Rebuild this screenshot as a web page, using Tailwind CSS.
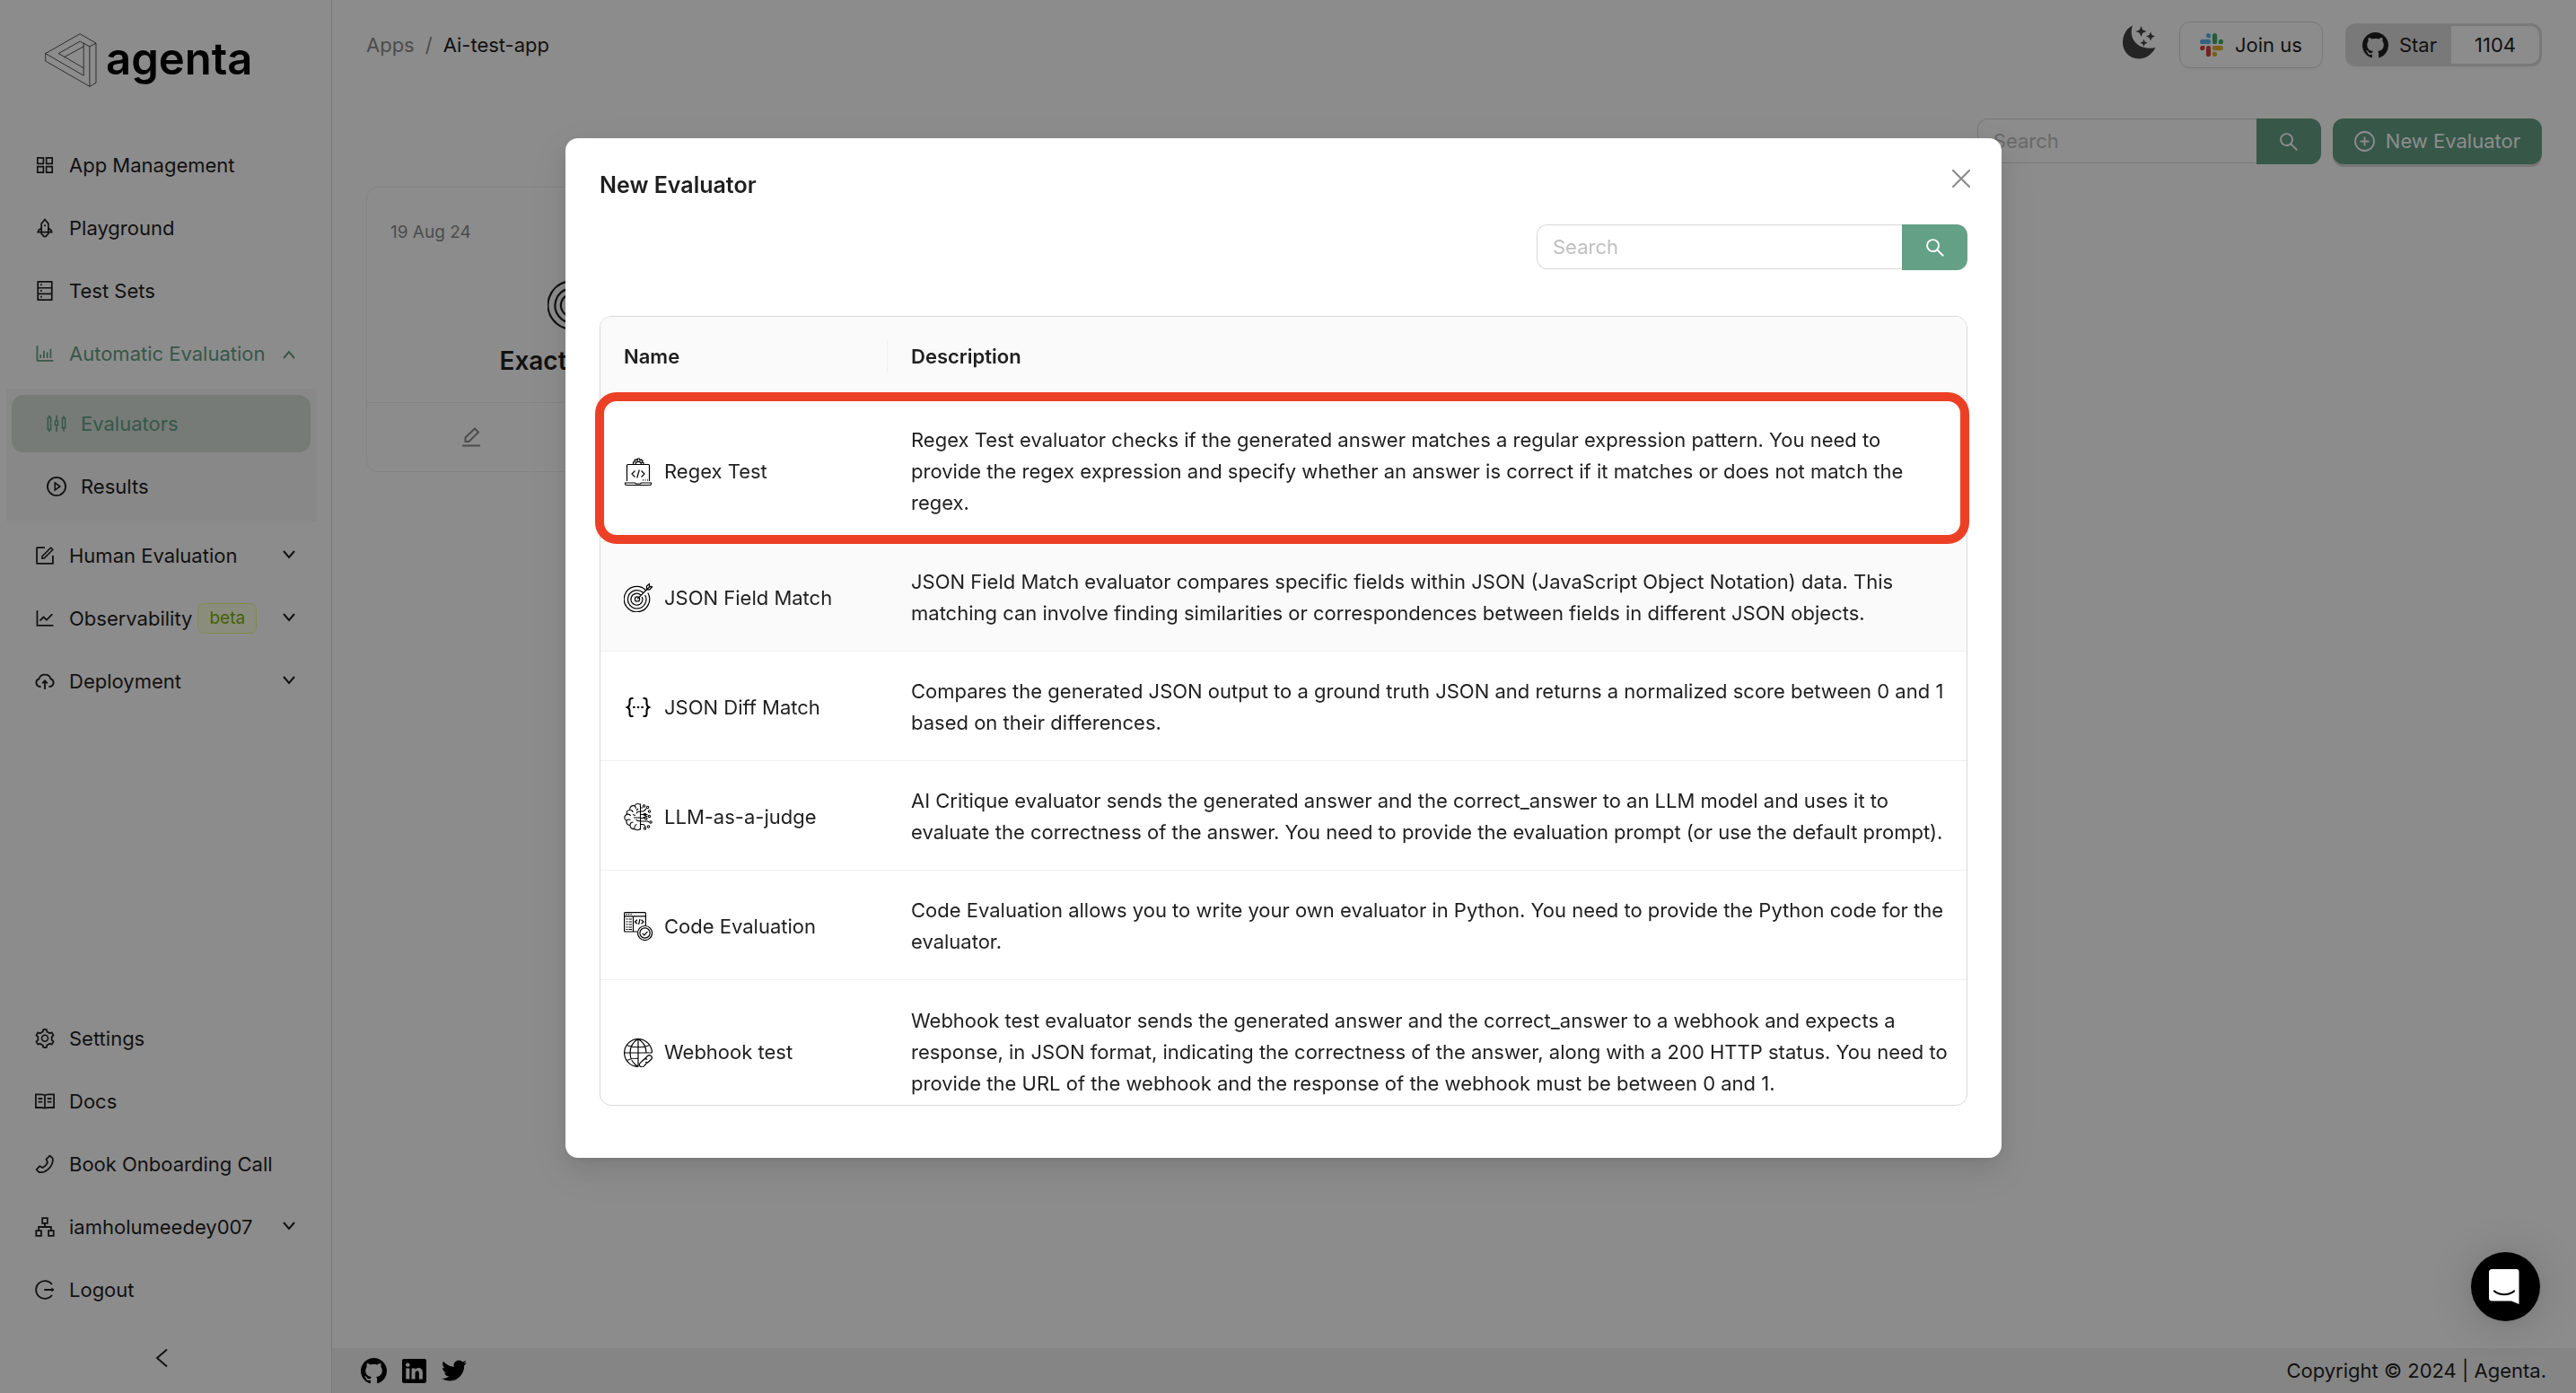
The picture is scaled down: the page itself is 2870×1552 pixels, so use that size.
<!DOCTYPE html>
<html lang="en">
<head>
<meta charset="utf-8">
<title>Agenta - Evaluators</title>
<meta name="viewport" content="width=device-width, initial-scale=1">
<script src="https://cdn.jsdelivr.net/npm/@tailwindcss/browser@4"></script>
</head>
<body class="bg-white font-['Inter',sans-serif] text-[22px] leading-[35px] text-[#1f1f1f]">

<!-- Shared icons -->
<svg class="hidden" aria-hidden="true">
  <symbol id="i-down" viewBox="0 0 16 16"><path d="M2 3l6 7 6-7" fill="none" stroke="currentColor" stroke-width="2"/></symbol>
  <symbol id="i-search" viewBox="64 64 896 896"><path fill="currentColor" d="M909.600 854.500L649.900 594.800C690.200 542.700 712 479 712 412c0-80.200-31.300-155.400-87.900-212.100-56.600-56.700-132-87.900-212.100-87.900s-155.500 31.300-212.100 87.900C143.200 256.500 112 331.800 112 412c0 80.100 31.300 155.500 87.900 212.100C256.500 680.800 331.800 712 412 712c67 0 130.600-21.800 182.700-62l259.700 259.600a8.200 8.200 0 0011.600 0l43.600-43.500a8.200 8.200 0 000-11.600zM570.400 570.400C528 612.700 471.800 636 412 636s-116-23.300-158.400-65.600C211.300 528 188 471.800 188 412s23.300-116.100 65.600-158.400C296 211.300 352.200 188 412 188s116.100 23.200 158.400 65.600S636 352.200 636 412s-23.300 116.100-65.600 158.400z"/></symbol>
  <symbol id="i-github" viewBox="0 0 16 16"><path fill="currentColor" d="M8 0C3.58 0 0 3.58 0 8c0 3.54 2.29 6.53 5.47 7.59.4.07.55-.17.55-.38 0-.19-.01-.82-.01-1.49-2.01.37-2.53-.49-2.69-.94-.09-.23-.48-.94-.82-1.13-.28-.15-.68-.52-.01-.53.63-.01 1.08.58 1.23.82.72 1.21 1.87.87 2.33.66.07-.52.28-.87.51-1.07-1.78-.2-3.64-.89-3.64-3.95 0-.87.31-1.59.82-2.15-.08-.2-.36-1.02.08-2.12 0 0 .67-.21 2.2.82.64-.18 1.32-.27 2-.27.68 0 1.36.09 2 .27 1.53-1.04 2.2-.82 2.2-.82.44 1.1.16 1.92.08 2.12.51.56.82 1.27.82 2.15 0 3.07-1.87 3.75-3.65 3.95.29.25.54.73.54 1.48 0 1.07-.01 1.93-.01 2.2 0 .21.15.46.55.38A8.01 8.01 0 0 0 16 8c0-4.42-3.58-8-8-8z"/></symbol>
  <symbol id="i-target" viewBox="0 0 32 32">
    <g fill="none" stroke="currentColor" stroke-width="1.200">
      <path d="M24.500 7.500a14.200 14.200 0 1 0 2.300 3"/><path d="M21.500 10.200a10.200 10.200 0 1 0 2.200 2.800"/><path d="M18.800 12.900a6.500 6.500 0 1 0 1.500 2"/>
      <circle cx="15" cy="17.400" r="2.600"/><path d="M15 17.400L29 3.500M25.500 6.800V3l3-2.600v3.200h3.200L29 6.800z"/>
    </g>
  </symbol>
</svg>

<div class="flex min-h-screen">
  <!-- Sidebar -->
  <aside class="flex w-[370px] shrink-0 flex-col border-r border-[#dcdcdc] px-[7px]">
    <a href="#" class="mt-[37px] mb-[55px] ml-[43px] flex h-[60px] items-center gap-[10px]">
      <svg class="h-[60px] w-[58px]" viewBox="42 40 172 178" fill="none" stroke="#000" stroke-width="2"><path d="M44 107L158 42l53 31v131l-21 12L44 132zM190 216V84l21-11M190 84l-32-17-71 40 83 48M44 107l126 73V72M170 84l-64 35"/></svg>
      <span class="pb-1 text-[49px] font-semibold text-black">agenta</span>
    </a>
    <nav class="flex flex-1 flex-col">
      <ul class="flex flex-col gap-[6px]">
        <li><a href="#" class="flex h-16 items-center pl-8"><svg class="mr-4 size-[22px]" viewBox="64 64 896 896" fill="currentColor"><path d="M464 144H160c-8.800 0-16 7.200-16 16v304c0 8.800 7.200 16 16 16h304c8.800 0 16-7.200 16-16V160c0-8.800-7.200-16-16-16zm-52 268H212V212h200v200zm452-268H560c-8.800 0-16 7.200-16 16v304c0 8.800 7.200 16 16 16h304c8.800 0 16-7.200 16-16V160c0-8.800-7.200-16-16-16zm-52 268H612V212h200v200zM464 544H160c-8.800 0-16 7.200-16 16v304c0 8.800 7.200 16 16 16h304c8.800 0 16-7.200 16-16V560c0-8.800-7.200-16-16-16zm-52 268H212V612h200v200zm452-268H560c-8.800 0-16 7.200-16 16v304c0 8.800 7.200 16 16 16h304c8.800 0 16-7.200 16-16V560c0-8.800-7.200-16-16-16zm-52 268H612V612h200v200z"/></svg>App Management</a></li>
        <li><a href="#" class="flex h-16 items-center pl-8"><svg class="mr-4 size-[22px]" viewBox="64 64 896 896" fill="none" stroke="currentColor" stroke-width="70"><path d="M355 700V315L512 125l157 190v385M355 520c-95 45-155 115-160 180h634c-5-65-65-135-160-180M355 700v60c0 45 50 60 65 70 20 50 50 75 92 75s72-25 92-75c15-10 65-25 65-70v-60"/><circle cx="512" cy="400" r="45" fill="currentColor" stroke="none"/></svg>Playground</a></li>
        <li><a href="#" class="flex h-16 items-center pl-8"><svg class="mr-4 size-[22px]" viewBox="64 64 896 896" fill="currentColor"><path d="M832 64H192c-17.700 0-32 14.300-32 32v832c0 17.700 14.300 32 32 32h640c17.700 0 32-14.300 32-32V96c0-17.700-14.300-32-32-32zm-600 72h560v208H232V136zm560 480H232V408h560v208zm0 272H232V680h560v208zM304 240a40 40 0 1080 0 40 40 0 10-80 0zm0 272a40 40 0 1080 0 40 40 0 10-80 0zm0 272a40 40 0 1080 0 40 40 0 10-80 0z"/></svg>Test Sets</a></li>
        <li>
          <button type="button" aria-expanded="true" class="flex h-16 w-full items-center pr-8 pl-8 text-[#64a085]"><svg class="mr-4 size-[22px]" viewBox="64 64 896 896" fill="currentColor"><path d="M888 792H200V168c0-4.400-3.600-8-8-8h-56c-4.400 0-8 3.600-8 8v688c0 4.400 3.600 8 8 8h752c4.400 0 8-3.600 8-8v-56c0-4.400-3.600-8-8-8zm-600-80h56c4.400 0 8-3.600 8-8V560c0-4.400-3.600-8-8-8h-56c-4.400 0-8 3.600-8 8v144c0 4.400 3.600 8 8 8zm152 0h56c4.400 0 8-3.600 8-8V384c0-4.400-3.600-8-8-8h-56c-4.400 0-8 3.600-8 8v320c0 4.400 3.600 8 8 8zm152 0h56c4.400 0 8-3.600 8-8V462c0-4.400-3.600-8-8-8h-56c-4.400 0-8 3.600-8 8v242c0 4.400 3.600 8 8 8zm152 0h56c4.400 0 8-3.600 8-8V304c0-4.400-3.600-8-8-8h-56c-4.400 0-8 3.600-8 8v400c0 4.400 3.600 8 8 8z"/></svg>Automatic Evaluation<svg class="ml-auto size-4 rotate-180"><use href="#i-down"/></svg></button>
          <ul class="mt-[7px] mr-[9px] flex flex-col gap-[6px] bg-[#f8f8f8] py-[7px] pr-[7px] pl-[6px]">
            <li><a href="#" aria-current="page" class="flex h-16 items-center rounded-[13px] bg-[#d7e1da] pl-[39px] text-[#64a085]"><svg class="mr-4 size-[22px]" viewBox="64 64 896 896" fill="none" stroke="currentColor" stroke-width="64"><path d="M120 240h130v540H120zM185 140v100M185 780v100M447 400h130v170H447zM512 140v260M512 570v310M775 260h130v440H775zM840 160v100M840 700v160"/></svg>Evaluators</a></li>
            <li><a href="#" class="flex h-16 items-center pl-[39px]"><svg class="mr-4 size-[22px]" viewBox="64 64 896 896" fill="none" stroke="currentColor" stroke-width="76"><circle cx="512" cy="512" r="410"/><path d="M440 350l225 162-225 162z" stroke-width="66"/></svg>Results</a></li>
          </ul>
        </li>
        <li><button type="button" aria-expanded="false" class="flex h-16 w-full items-center pr-8 pl-8"><svg class="mr-4 size-[22px]" viewBox="64 64 896 896" fill="currentColor"><path d="M904 512h-56c-4.400 0-8 3.600-8 8v320H184V184h320c4.400 0 8-3.600 8-8v-56c0-4.400-3.600-8-8-8H144c-17.700 0-32 14.300-32 32v736c0 17.700 14.300 32 32 32h736c17.700 0 32-14.300 32-32V520c0-4.400-3.600-8-8-8z"/><path d="M355.900 534.900L354 653.800c-.1 8.900 7.100 16.200 16 16.200h.4l118-2.900c2-.1 4-.9 5.400-2.300l415.900-415c3.100-3.100 3.100-8.200 0-11.300L785.400 114.300c-1.600-1.600-3.600-2.300-5.700-2.300s-4.100.8-5.700 2.300l-415.800 415a8.300 8.300 0 00-2.300 5.600zm63.500 23.600L779.700 199l45.200 45.100-360.500 359.700-45.700 1.100.7-46.400z"/></svg>Human Evaluation<svg class="ml-auto size-4"><use href="#i-down"/></svg></button></li>
        <li><button type="button" aria-expanded="false" class="flex h-16 w-full items-center pr-8 pl-8"><svg class="mr-4 size-[22px]" viewBox="64 64 896 896" fill="currentColor"><path d="M888 792H200V168c0-4.400-3.600-8-8-8h-56c-4.400 0-8 3.600-8 8v688c0 4.400 3.600 8 8 8h752c4.400 0 8-3.600 8-8v-56c0-4.400-3.600-8-8-8zM305.800 637.700c3.100 3.100 8.100 3.100 11.300 0l138.300-137.600L583 628.500c3.100 3.100 8.200 3.100 11.300 0l275.400-275.300c3.100-3.100 3.100-8.200 0-11.300l-39.600-39.600a8.030 8.030 0 00-11.300 0l-230 229.900L461.400 404a8.030 8.030 0 00-11.300 0L266.300 586.700a8.030 8.030 0 000 11.300l39.500 39.700z"/></svg>Observability<span class="ml-[6px] rounded-[7px] border border-[#eaff8f] bg-[#fcffe6] px-3 text-[19px] leading-[32px] text-[#7cb305]">beta</span><svg class="ml-auto size-4"><use href="#i-down"/></svg></button></li>
        <li><button type="button" aria-expanded="false" class="flex h-16 w-full items-center pr-8 pl-8"><svg class="mr-4 size-[22px]" viewBox="64 64 896 896" fill="none" stroke="currentColor" stroke-width="76"><path d="M330 755H290a180 180 0 0 1-45-350 280 280 0 0 1 534 0 180 180 0 0 1-45 350h-40M512 880V520M400 610l112-120 112 120"/></svg>Deployment<svg class="ml-auto size-4"><use href="#i-down"/></svg></button></li>
      </ul>
      <ul class="mt-auto flex flex-col gap-[6px]">
        <li><a href="#" class="flex h-16 items-center pl-8"><svg class="mr-4 size-[22px]" viewBox="64 64 896 896" fill="currentColor"><path d="M924.800 625.700l-65.500-56c3.100-19 4.700-38.400 4.700-57.800s-1.600-38.800-4.700-57.800l65.500-56a32.030 32.030 0 009.300-35.200l-.9-2.600a443.740 443.740 0 00-79.700-137.900l-1.800-2.100a32.120 32.120 0 00-35.100-9.500l-81.300 28.900c-30-24.600-63.500-44-99.700-57.600l-15.700-85a32.050 32.050 0 00-25.800-25.700l-2.700-.5c-52.100-9.400-106.900-9.400-159 0l-2.700.5a32.050 32.050 0 00-25.800 25.700l-15.800 85.400a351.860 351.860 0 00-99 57.400l-81.900-29.100a32 32 0 00-35.100 9.500l-1.800 2.100a446.020 446.020 0 00-79.700 137.900l-.9 2.600c-4.500 12.500-.8 26.500 9.300 35.200l66.300 56.600c-3.100 18.800-4.600 38-4.600 57.100 0 19.200 1.500 38.400 4.600 57.100L99 625.500a32.030 32.030 0 00-9.300 35.200l.9 2.600c18.100 50.400 44.900 96.900 79.700 137.900l1.800 2.100a32.120 32.120 0 0035.100 9.500l81.900-29.100c29.800 24.500 63.100 43.900 99 57.400l15.800 85.400a32.050 32.050 0 0025.800 25.700l2.700.5a449.400 449.400 0 00159 0l2.700-.5a32.050 32.050 0 0025.800-25.700l15.700-85a350 350 0 0099.700-57.600l81.300 28.900a32 32 0 0035.100-9.500l1.800-2.100c34.800-41.100 61.600-87.500 79.700-137.900l.9-2.600c4.500-12.300.8-26.300-9.300-35zM788.300 465.900c2.500 15.100 3.800 30.600 3.800 46.100s-1.300 31-3.800 46.100l-6.600 40.100 74.700 63.900a370.030 370.030 0 01-42.600 73.600L721 702.800l-31.400 25.800c-23.900 19.600-50.500 35-79.300 45.800l-38.100 14.300-17.900 97a377.500 377.500 0 01-85 0l-17.900-97.200-37.800-14.500c-28.500-10.800-55-26.200-78.700-45.700l-31.400-25.900-93.400 33.200c-17-22.900-31.200-47.600-42.600-73.600l75.500-64.500-6.500-40c-2.400-14.900-3.700-30.300-3.700-45.500 0-15.300 1.200-30.600 3.700-45.500l6.500-40-75.500-64.500c11.300-26.100 25.600-50.700 42.600-73.600l93.400 33.200 31.400-25.900c23.700-19.500 50.200-34.900 78.700-45.700l37.900-14.300 17.900-97.200c28.100-3.200 56.800-3.200 85 0l17.900 97 38.100 14.300c28.700 10.800 55.400 26.200 79.300 45.800l31.400 25.800 92.800-32.900c17 22.900 31.200 47.600 42.600 73.600L781.800 426l6.500 39.900zM512 326c-97.200 0-176 78.800-176 176s78.800 176 176 176 176-78.800 176-176-78.800-176-176-176zm79.200 255.200A111.600 111.600 0 01512 614c-29.900 0-58-11.700-79.200-32.800A111.600 111.600 0 01400 502c0-29.900 11.700-58 32.800-79.200C454 401.600 482.100 390 512 390c29.900 0 58 11.600 79.200 32.800A111.600 111.600 0 01624 502c0 29.900-11.700 58-32.800 79.200z"/></svg>Settings</a></li>
        <li><a href="#" class="flex h-16 items-center pl-8"><svg class="mr-4 size-[22px]" viewBox="64 64 896 896" fill="none" stroke="currentColor" stroke-width="72"><path d="M100 197h260c60 0 152 40 152 50 0-10 92-50 152-50h260v600H664c-60 0-152 40-152 50 0-10-92-50-152-50H100zM512 240v600M210 390h190M210 535h190M624 390h190M624 535h190"/></svg>Docs</a></li>
        <li><a href="#" class="flex h-16 items-center pl-8"><svg class="mr-4 size-[22px]" viewBox="64 64 896 896" fill="none" stroke="currentColor" stroke-width="72" stroke-linejoin="round"><path d="M740 130l130 120c20 190-70 370-215 500-125 110-265 155-405 130L130 760l150-160 135 75c110-55 175-130 220-240l-65-140z"/></svg>Book Onboarding Call</a></li>
        <li><button type="button" aria-expanded="false" class="flex h-16 w-full items-center pr-8 pl-8"><svg class="mr-4 size-[22px]" viewBox="64 64 896 896" fill="none" stroke="currentColor" stroke-width="72"><path d="M396 108h232v232H396zM116 684h232v232H116zM676 684h232v232H676zM512 340v170M232 684V512h560v172"/></svg>iamholumeedey007<svg class="ml-auto size-4"><use href="#i-down"/></svg></button></li>
        <li><a href="#" class="flex h-16 items-center pl-8"><svg class="mr-4 size-[22px]" viewBox="64 64 896 896" fill="none" stroke="currentColor" stroke-width="72"><path d="M835 265a405 405 0 1 0 0 494M480 512h400"/><path d="M815 410l130 102-130 102z" fill="currentColor" stroke="none"/></svg>Logout</a></li>
      </ul>
    </nav>
    <button type="button" aria-label="Collapse sidebar" class="flex h-[83px] items-center justify-center pt-1 pr-2"><svg class="size-[22px]" viewBox="0 0 22 22" fill="none" stroke="currentColor" stroke-width="2"><path d="M16 1.500L5 11l11 9.500"/></svg></button>
  </aside>

  <!-- Page -->
  <div class="flex min-w-0 flex-1 flex-col">
    <header class="flex items-center justify-between px-[38px] pt-[24px]">
      <nav aria-label="Breadcrumb" class="flex gap-3"><a href="#" class="text-[#8c8c8c]">Apps</a><span class="text-[#8c8c8c]">/</span><span>Ai-test-app</span></nav>
      <div class="flex items-center">
        <button type="button" aria-label="Dark mode" class="mr-[26px] mb-[6px]"><svg class="size-[38px]" viewBox="0 0 38 38" fill="#434343"><path d="M12 0.500C7 14 17 29 37.500 25 34 32 27 37.500 19 37.500 8 37.500 1 29 1 19.500 1 10 6 3 12 .5z"/><path d="M21.500 1l1.700 4.300 4.300 1.700-4.300 1.700-1.700 4.300-1.700-4.300L15.500 7l4.300-1.700zM32 7.500l1.500 3.500 3.500 1.500-3.500 1.500-1.500 3.500-1.500-3.500L27 12.500l3.500-1.500zM24.500 15.500l1.200 3 3 1.200-3 1.200-1.200 3-1.200-3-3-1.200 3-1.200z"/></svg></button>
        <a href="#" class="mr-[25px] flex h-[52px] items-center gap-[13px] rounded-[12px] border border-[#d9d9d9] px-[22px] shadow-[0_3px_0_rgba(0,0,0,0.02)]">
          <svg class="size-[26px]" viewBox="0 0 26 26"><path d="M9.500 0a2.600 2.600 0 0 1 2.600 2.600v2.600H9.500a2.600 2.600 0 0 1 0-5.200zM2.700 6.800h6.800a2.600 2.600 0 0 1 0 5.200H2.700a2.600 2.600 0 0 1 0-5.200z" fill="#5cb8e8"/><path d="M16.500 0a2.600 2.600 0 0 1 2.600 2.600v6.800a2.600 2.600 0 0 1-5.200 0V2.600A2.600 2.600 0 0 1 16.500 0zM20.800 9.400a2.600 2.600 0 1 1 2.600 2.600h-2.600z" fill="#41ac66"/><path d="M16.500 14h6.800a2.600 2.600 0 0 1 0 5.200h-6.800a2.600 2.600 0 0 1 0-5.200zM13.900 20.800h2.600a2.600 2.600 0 1 1-2.600 2.600z" fill="#dcae30"/><path d="M9.500 14a2.600 2.600 0 0 1 2.600 2.600v6.800a2.600 2.600 0 0 1-5.200 0v-6.800A2.600 2.600 0 0 1 9.500 14zM2.700 14h2.600v2.600A2.600 2.600 0 1 1 2.700 14z" fill="#d9403c"/></svg>Join us
        </a>
        <a href="#" class="flex h-[48px] items-stretch rounded-[12px] bg-[#dcdcdc] pr-[3px] shadow-[0_3px_0_rgba(0,0,0,0.02)]">
          <span class="flex items-center gap-[12px] pr-4 pl-[19px]"><svg class="size-[29px]"><use href="#i-github"/></svg>Star</span>
          <span class="my-[3px] flex items-center rounded-r-[10px] bg-white px-[26px]">1104</span>
        </a>
      </div>
    </header>

    <main class="flex flex-1 flex-col px-[38px] pt-[56px] pb-8">
      <div class="flex items-start justify-end gap-[13px]">
        <form class="flex w-[383px]">
          <input type="search" aria-label="Search evaluators" placeholder="Search" class="h-[50px] min-w-0 flex-1 rounded-l-[12px] border border-r-0 border-[#d9d9d9] px-[17px] placeholder:text-[#bfbfbf]">
          <button type="button" aria-label="Search" class="flex h-[51px] w-[72px] items-center justify-center rounded-r-[12px] bg-[#64a085] text-white"><svg class="size-[22px]"><use href="#i-search"/></svg></button>
        </form>
        <button type="button" class="flex h-[51px] items-center gap-[12px] rounded-[12px] bg-[#64a085] px-6 text-white shadow-[0_3px_0_#d9d9d9]"><svg class="size-[23px]" viewBox="0 0 23 23" fill="none" stroke="currentColor" stroke-width="1.800"><circle cx="11.500" cy="11.500" r="10.500"/><path d="M11.500 6.500v10M6.500 11.500h10"/></svg>New Evaluator</button>
      </div>

      <article class="mt-[25px] w-[464px] rounded-[13px] border border-[#f0f0f0]">
        <div class="flex h-[239px] flex-col items-center">
          <span class="mt-[32px] self-start pl-[26px] text-[19px] text-[#8c8c8c]">19 Aug 24</span>
          <svg class="mt-[31px] size-[60px]"><use href="#i-target"/></svg>
          <h3 class="mt-[18px] text-[28px] font-semibold">Exact Match</h3>
        </div>
        <div class="grid h-[77px] grid-cols-2 place-items-center border-t border-[#f0f0f0] text-[#8c8c8c]">
          <button type="button" aria-label="Edit"><svg class="size-[22px]" viewBox="0 0 22 22" fill="none" stroke="currentColor" stroke-width="2"><path d="M1 20.500h20M4.500 16v-4.500L15 1.500l4 4L8.500 16z"/></svg></button>
          <button type="button" aria-label="Delete"><svg class="size-[22px]" viewBox="0 0 22 22" fill="none" stroke="currentColor" stroke-width="2"><path d="M1 5h20M7 5V1.500h8V5M4 5l1 15.500h12L18 5"/></svg></button>
        </div>
      </article>
    </main>

    <footer class="flex h-[50px] items-center justify-between bg-[#f3f3f3] pr-[33px] pl-8">
      <div class="flex items-center gap-[17px] text-black">
        <a href="#" aria-label="GitHub"><svg class="size-[29px]"><use href="#i-github"/></svg></a>
        <a href="#" aria-label="LinkedIn"><svg class="size-[27px]" viewBox="0 0 16 16" fill="currentColor"><path d="M0 1.146C0 .513.526 0 1.175 0h13.650C15.474 0 16 .513 16 1.146v13.708c0 .633-.526 1.146-1.175 1.146H1.175C.526 16 0 15.487 0 14.854V1.146zm4.943 12.248V6.169H2.542v7.225h2.401zm-1.200-8.212c.837 0 1.358-.554 1.358-1.248-.015-.709-.520-1.248-1.342-1.248-.822 0-1.359.540-1.359 1.248 0 .694.521 1.248 1.327 1.248h.016zm4.908 8.212V9.359c0-.216.016-.432.080-.586.173-.431.568-.878 1.232-.878.869 0 1.216.662 1.216 1.634v3.865h2.401V9.250c0-2.220-1.184-3.252-2.764-3.252-1.274 0-1.845.700-2.165 1.193v.025h-.016a5.540 5.540 0 0 1 .016-.025V6.169h-2.400c.030.678 0 7.225 0 7.225h2.400z"/></svg></a>
        <a href="#" aria-label="Twitter"><svg class="size-[28px]" viewBox="0 0 24 24" fill="currentColor"><path d="M23.953 4.570a10 10 0 01-2.825.775 4.958 4.958 0 002.163-2.723c-.951.555-2.005.959-3.127 1.184a4.920 4.920 0 00-8.384 4.482C7.690 8.095 4.067 6.130 1.640 3.162a4.822 4.822 0 00-.666 2.475c0 1.710.870 3.213 2.188 4.096a4.904 4.904 0 01-2.228-.616v.060a4.923 4.923 0 003.946 4.827 4.996 4.996 0 01-2.212.085 4.936 4.936 0 004.604 3.417 9.867 9.867 0 01-6.102 2.105c-.390 0-.779-.023-1.170-.067a13.995 13.995 0 007.557 2.209c9.053 0 13.998-7.496 13.998-13.985 0-.210 0-.420-.015-.630A9.935 9.935 0 0024 4.590z"/></svg></a>
      </div>
      <p>Copyright © 2024 | Agenta.</p>
    </footer>
  </div>
</div>

<!-- Modal -->
<div class="fixed inset-0 flex items-start justify-center bg-black/45 pt-[154px] pr-[10px]">
  <section role="dialog" aria-modal="true" aria-labelledby="modal-title" class="relative w-[1600px] rounded-[14px] bg-white px-[38px] pb-[58px] shadow-[0_10px_26px_rgba(0,0,0,0.08),0_5px_10px_-6px_rgba(0,0,0,0.12),0_14px_45px_13px_rgba(0,0,0,0.05)]">
    <div class="flex items-center justify-between pt-[32px]">
      <h2 id="modal-title" class="text-[25px] leading-[40px] font-semibold">New Evaluator</h2>
      <button type="button" aria-label="Close" class="mr-[-4px] mb-[14px] text-[#8c8c8c]"><svg class="size-[22px]" viewBox="0 0 22 22" fill="none" stroke="currentColor" stroke-width="2.200" stroke-linecap="round"><path d="M2 2l18 18M20 2L2 20"/></svg></button>
    </div>
    <form class="mt-[24px] ml-auto flex w-[480px]">
      <input type="search" aria-label="Search evaluator types" placeholder="Search" class="h-[50px] min-w-0 flex-1 rounded-l-[12px] border border-r-0 border-[#d9d9d9] px-[17px] placeholder:text-[#bfbfbf]">
      <button type="button" aria-label="Search" class="flex h-[51px] w-[73px] items-center justify-center rounded-r-[12px] bg-[#64a085] text-white"><svg class="size-[22px]"><use href="#i-search"/></svg></button>
    </form>

    <div class="relative mt-[51px]">
      <div class="h-[880px] overflow-hidden rounded-[13px] border border-[#d9d9d9]">
        <table class="w-full table-fixed border-separate border-spacing-0 text-left">
          <colgroup><col class="w-[320px]"><col></colgroup>
          <thead>
            <tr class="h-[88px] bg-[#fafafa]">
              <th scope="col" class="border-b border-[#f0f0f0] pt-[2px] pl-[26px] font-semibold"><div class="border-r border-[#f0f0f0]">Name</div></th>
              <th scope="col" class="border-b border-[#f0f0f0] px-[26px] pt-[2px] font-semibold">Description</th>
            </tr>
          </thead>
          <tbody>
            <tr>
              <td class="border-b border-[#f0f0f0] pt-[32px] pb-[25px] pl-[26px]"><div class="flex items-center gap-[13px]">
                <svg class="size-8" viewBox="0 0 32 32" fill="none" stroke="#000" stroke-width="1.200"><path d="M3.500 26V8.500a1 1 0 0 1 1-1h23a1 1 0 0 1 1 1V26M1.500 28h11l1 1h5l1-1h11v1.300c0 .7-.6 1.200-1.500 1.200H3c-.9 0-1.500-.5-1.500-1.200zM12.500 14.500L9 18l3.500 3.500M19.500 14.500L23 18l-3.500 3.500M17.300 13.500l-2.600 9"/><path d="M10.500 7.500V5l2-.5-.5-2 2-.5 1 1 .5-2h2l.5 2 1.500-1 1.500 1.500-1 1.500 2 .5v2M13 7.500a3.200 3.200 0 0 1 6.400 0"/><path d="M21 24.800h1M23.500 24.800h1M26 24.800h1"/></svg>Regex Test</div></td>
              <td class="border-b border-[#f0f0f0] pt-[32px] pr-[20px] pb-[25px] pl-[26px]">Regex Test evaluator checks if the generated answer matches a regular expression pattern. You need to provide the regex expression and specify whether an answer is correct if it matches or does not match the regex.</td>
            </tr>
            <tr class="bg-[#fafafa]">
              <td class="border-b border-[#f0f0f0] pt-[27px] pb-[24px] pl-[26px]"><div class="flex items-center gap-[13px]"><svg class="size-8 text-black"><use href="#i-target"/></svg>JSON Field Match</div></td>
              <td class="border-b border-[#f0f0f0] pt-[27px] pr-[20px] pb-[24px] pl-[26px]">JSON Field Match evaluator compares specific fields within JSON (JavaScript Object Notation) data. This matching can involve finding similarities or correspondences between fields in different JSON objects.</td>
            </tr>
            <tr>
              <td class="border-b border-[#f0f0f0] pt-[27px] pb-[24px] pl-[26px]"><div class="flex items-center gap-[13px]">
                <svg class="size-8" viewBox="0 0 32 32" fill="none" stroke="#000" stroke-width="2"><path d="M10.500 6H9c-1.700 0-2.500 1-2.500 2.600V12c0 2-.7 3.300-2.500 4 1.800.7 2.500 2 2.500 4v3.400C6.500 25 7.300 26 9 26h1.500M21.500 6H23c1.700 0 2.500 1 2.500 2.600V12c0 2 .7 3.300 2.500 4-1.800.7-2.500 2-2.500 4v3.400c0 1.600-.8 2.600-2.500 2.600h-1.500"/><path d="M10.200 16h2.400M14.800 16h2.400M19.400 16h2.400"/></svg>JSON Diff Match</div></td>
              <td class="border-b border-[#f0f0f0] pt-[27px] pr-[20px] pb-[24px] pl-[26px]">Compares the generated JSON output to a ground truth JSON and returns a normalized score between 0 and 1 based on their differences.</td>
            </tr>
            <tr>
              <td class="border-b border-[#f0f0f0] pt-[27px] pb-[24px] pl-[26px]"><div class="flex items-center gap-[13px]">
                <svg class="size-8" viewBox="0 0 32 32" fill="none" stroke="#000" stroke-width="1.100"><path d="M18.500 1.500v29M18.500 3c-1-2-5-2.300-6.500.8C8.500 3 6 5.500 6.800 8.500 4 8.500 2.500 11 3.500 13.500 0 14.500 0 19 3 20.500c-.5 3 1.500 5 4 5-.2 3 2.500 4.500 5 4 1.500 2 5.500 1.500 6.500-.5M7 8.500c2 0 3 1 3 2.500M12 4c1 .5 1.500 1.500 1.500 3M3.500 13.500c1.500-.8 3.500 0 4 1.500M3 20.500c1-1.500 3-2 4.500-1M7 25.500c0-2 1.500-3.500 3.500-3.500M12 29c-.5-2 .5-4 2.500-4.500M18.500 10c-2 0-4 .5-4.500 2.500M18.500 17H11M18.500 21c-2.500 0-4-.5-5-2M10 13.500l3 1M14 9l2-2"/><path d="M18.500 6H21M18.500 10h3.500l3-3M18.500 13.500h8M18.500 17.500h5M18.500 21h8l2 1M18.500 24.500H22l2.500 3M21.500 17l5-2"/><circle cx="22.500" cy="4" r="1.200"/><circle cx="26.500" cy="5.500" r="1.200"/><circle cx="28.500" cy="10" r="1.200"/><circle cx="28.500" cy="15.500" r="1.200"/><circle cx="24.800" cy="18" r="1.200"/><circle cx="30" cy="22" r="1.200"/><circle cx="27.500" cy="27" r="1.200"/><circle cx="23.500" cy="29" r="1.200"/><circle cx="23.500" cy="13.500" r="1.200"/></svg>LLM-as-a-judge</div></td>
              <td class="border-b border-[#f0f0f0] pt-[27px] pr-[20px] pb-[24px] pl-[26px]">AI Critique evaluator sends the generated answer and the correct_answer to an LLM model and uses it to evaluate the correctness of the answer. You need to provide the evaluation prompt (or use the default prompt).</td>
            </tr>
            <tr>
              <td class="border-b border-[#f0f0f0] pt-[27px] pb-[24px] pl-[26px]"><div class="flex items-center gap-[13px]">
                <svg class="size-8" viewBox="0 0 32 32" fill="none" stroke="#000" stroke-width="1.200"><path d="M15 22H1.500a.9.900 0 0 1-.9-.9V1.500a.9.900 0 0 1 .9-.9h22a.9.900 0 0 1 .9.900V15M.6 4.800h23.800M10.500 4.800V22M15 8.800L12.500 11l2.500 2.200M19.500 8.800L22 11l-2.500 2.200M18 8l-1.500 6"/><path d="M2.500 2.700h1.200M5 2.700h1.200M7.500 2.700h1.200"/><path d="M2.500 8h2M5.500 8h3.500M2.500 11h2M5.500 11h3.500M2.500 14h2M5.500 14h3.500M2.500 17h2M5.500 17h3.500M2.500 19.500h2M5.500 19.500h3.500"/><circle cx="23.500" cy="23.500" r="8"/><circle cx="23.500" cy="23.500" r="5.600"/><path d="M20.800 23.800l2 2 3.600-4"/></svg>Code Evaluation</div></td>
              <td class="border-b border-[#f0f0f0] pt-[27px] pr-[20px] pb-[24px] pl-[26px]">Code Evaluation allows you to write your own evaluator in Python. You need to provide the Python code for the evaluator.</td>
            </tr>
            <tr>
              <td class="border-b border-[#f0f0f0] pt-[28px] pb-[24px] pl-[26px]"><div class="flex items-center gap-[13px]">
                <svg class="size-8" viewBox="0 0 32 32" fill="none" stroke="#000" stroke-width="1.200"><path d="M31.400 16A15.400 15.400 0 1 0 16 31.400M16 .6v30.800M.6 16h30.800M3 7.500c7 3 19 3 26 0M3 24.500c5-2.200 9-2.500 13-2.500M16 .6C9.500 4.500 7 11 7 16s2.500 11.500 9 15.400M16 .6c6.500 3.900 9 10.400 9 15.400"/><path d="M21.500 24.500l5-5c2.500-2.500 6.500 1 4 3.800l-2.800 2.700c-1 1-2.500 1-3.500.3M26 23.500c-1.200-1.200-2.800-1-3.800 0l-4 3.800c-2.300 2.500 1 6 3.800 3.800l4.500-4.600"/></svg>Webhook test</div></td>
              <td class="border-b border-[#f0f0f0] pt-[28px] pr-[20px] pb-[24px] pl-[26px]">Webhook test evaluator sends the generated answer and the correct_answer to a webhook and expects a response, in JSON format, indicating the correctness of the answer, along with a 200 HTTP status. You need to provide the URL of the webhook and the response of the webhook must be between 0 and 1.</td>
            </tr>
          </tbody>
        </table>
      </div>
      <div class="pointer-events-none absolute top-[85px] right-[-2px] left-[-5px] h-[169px] rounded-[24px] border-[10px] border-[#ec4026]"></div>
    </div>
  </section>
</div>

<!-- Chat launcher -->
<button type="button" aria-label="Open chat" class="fixed right-[40px] bottom-[80px] flex size-[77px] items-center justify-center rounded-full bg-black shadow-[0_2px_10px_rgba(0,0,0,0.06),0_3px_50px_rgba(0,0,0,0.16)]">
  <svg class="size-[39px]" viewBox="0 0 39 39"><path d="M6 0h25.500a3 3 0 0 1 3 3v36L26 35.500H4.500a3.500 3.500 0 0 1-3.500-3.500V3.500A3.500 3.500 0 0 1 4.500 0z" fill="#fff"/><path d="M7 24.500c6 5 16 5 22 0" fill="none" stroke="#000" stroke-width="2.200" stroke-linecap="round"/></svg>
</button>
</body>
</html>
